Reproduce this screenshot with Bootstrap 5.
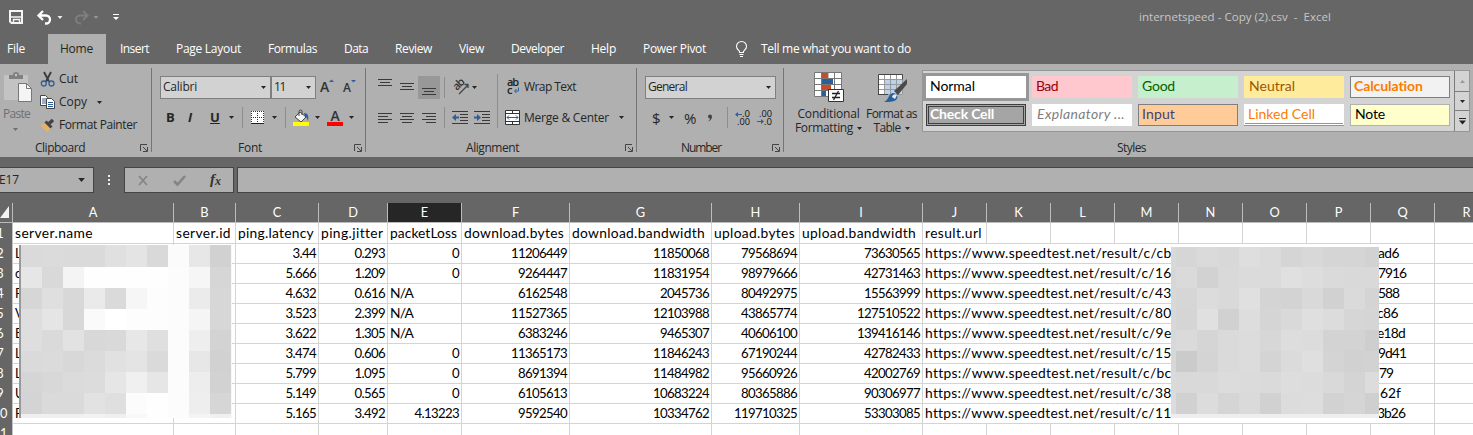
<!DOCTYPE html>
<html lang="en">
<head>
<meta charset="utf-8">
<title>internetspeed - Excel</title>
<link rel="stylesheet" href="https://cdn.jsdelivr.net/npm/bootstrap@5.3.0/dist/css/bootstrap.min.css">
<script src="https://cdn.jsdelivr.net/npm/bootstrap@5.3.0/dist/js/bootstrap.bundle.min.js"></script>
<style>
body{font:12px/16px "Open Sans","Noto Sans",sans-serif;background:#666;color:#262626;width:1473px;height:435px;overflow:hidden}
svg{display:block;overflow:visible}
[data-w]{white-space:pre;display:inline-block}
.qat{height:34px;padding-left:9px;display:grid;grid-template-columns:28px 20px 17px 19px 20px 1026px 1fr;align-items:center}
.doc-title{color:#c6c6c6;font-size:11.5px;margin-top:-1px}
.tabs{height:30px;display:grid;grid-template-columns:48px 58px 14px 56px 92px 76px 51px 64px 52px 80px 52px 93px 25px 1fr;color:#fff;line-height:30px}
.tabs .tab-file{padding-left:7px}
.tabs .tab-home{background:#b0b0b0;color:#262626;padding-left:12px}
.ribbon{height:93px;background:#b0b0b0}
.grp{position:relative;height:93px;padding-top:4px;flex:none}
.grp:not(:last-child)::after{content:"";position:absolute;right:0;top:4px;height:84px;width:1px;background:#757575}
.r1,.r2{display:grid;align-items:center}
.r1{height:36px;grid-template-rows:36px;padding-top:1px}.r2{height:27px;grid-template-rows:27px}
.cap{margin-top:9px;height:16px;display:grid;align-items:center}
.combo{height:23px;border:1px solid #7f7f7f;background:#d2d2d2;display:flex;align-items:center;justify-content:space-between;padding:0 4px 0 2px}
.vsep{width:1px;height:21px;background:#8e8e8e}
.g-clip{width:152px}.g-clip .cap{grid-template-columns:105px 1fr;padding-left:35px}
.clip-body{height:63px;display:grid;grid-template-columns:40px 1fr}
.clip-rows{display:grid;grid-template-rows:22px 24px 22px}
.clip-rows>div{display:grid;grid-template-columns:19px 38px 1fr;align-items:center}
.clip-rows>div:last-child{grid-template-columns:19px 1fr}
.paste{color:#6f6f6f;padding:4px 0 0 3px}
.paste-caret{margin:6px 0 0 10px}
.g-font{width:214px}.g-font .cap{grid-template-columns:116px 1fr;padding-left:86px}
.g-font .r1{padding-left:8px;grid-template-columns:111px 49px 22px 20px}
.g-font .r2{padding-left:14px;grid-template-columns:22px 22px 19px 13px 9px 21px 13px 8px 22px 12px 22px 10px}
.g-font .r2 b{font-size:13px;line-height:18px;margin-top:-2px}
.g-align{width:271px}.g-align .cap{grid-template-columns:159px 1fr;padding-left:100px}
.g-align .r1{padding-left:12px;grid-template-columns:22px 18px 26px 8px 20px 25px 10px 17px 1fr}
.g-align .r2{padding-left:12px;grid-template-columns:22px 22px 22px 8px 22px 23px 8px 19px 95px 1fr}
.tall{height:54px;align-self:start;margin-top:5px}
.pressed{width:22px;height:23px;background:#989898;padding:12px 4px 0}
.g-num{width:147px}.g-num .cap{grid-template-columns:91px 1fr;padding-left:44px}
.g-num .r1{padding-left:8px;grid-template-columns:131px}
.g-num .r2{padding-left:15px;grid-template-columns:17px 15px 23px 20px 8px 22px 1fr;font-size:15px}
.g-sty{width:689px}
.sty-body{height:63px;display:grid;grid-template-columns:12px 65px 61px 548px}
.big{display:flex;flex-direction:column;align-items:center;padding-top:3px}
.big svg.pic{height:33px;width:31px}
.gallery{margin-top:2px;height:62px;border:1px solid #969696;background:#d3d3d3;display:grid;grid-template-columns:531px 15px}
.cells{display:grid;grid-template-columns:repeat(5,100px);grid-template-rows:22px 22px;gap:6px;padding:5px 3px;font:14px/20px Lato,sans-serif}
.cells>div{padding:0 4px;height:22px;border:1px solid transparent;overflow:hidden}
.cells [data-w]{line-height:18px;vertical-align:top}
.cells .c-normal{background:#fff;color:#000;outline:3px solid #979797;padding-left:3px}
.cells .c-bad{background:#ffc7ce;color:#9c0006;padding-left:3px}.cells .c-good{background:#c6efce;color:#006100;padding-left:3px}.c-neutral{background:#ffeb9c;color:#9c5700}
.cells .c-calc{background:#f2f2f2;color:#fa7d00;border-color:#7f7f7f;font-weight:700;padding-left:3px}
.cells .c-check{background:#a5a5a5;color:#fff;border:3px double #3f3f3f;font-weight:700;padding:0 1px}
.cells .c-check [data-w]{line-height:14px}
.c-exp{background:#fff;color:#7f7f7f;font-style:italic}
.cells .c-input{background:#ffcc99;color:#3f3f76;border-color:#7f7f7f;padding-left:3px}
.cells .c-link{background:#fff;color:#fa7d00;border-bottom:3px double #fa7d00;padding-left:3px}
.cells .c-note{background:#ffffcc;color:#000;border-color:#b2b2b2}
.scrollers{display:grid;grid-template-rows:21px 19px 20px}
.scrollers>div{border-left:1px solid #7c7c7c;border-bottom:1px solid #7c7c7c;display:flex;align-items:center;justify-content:center}
.scrollers>div:last-child{border-bottom:0}
.g-sty .cap{padding-left:333px}
.fbar{height:46px;padding-top:10px;display:grid;grid-template-columns:94px 30px 110px 3px 1fr}
.fbox{height:26px;border:1px solid #444;background:#b0b0b0;display:flex;align-items:center}
.name-box [data-w]{margin-left:-1px}
.sheet{position:relative;height:232px;background:#fff;overflow:hidden;font:12.8px/20px Lato,sans-serif;color:#000}
.sheet [data-w]{font-size:13.8px;line-height:20px;vertical-align:top}
.srow{display:grid;height:20px;margin-left:-12px;grid-template-columns:25px 161px 62px 83px 69px 74px 108px 142px 88px 123px repeat(9,64px)}
.srow>div{border-right:1px solid #d4d4d4;border-bottom:1px solid #d4d4d4;padding:0 2px;white-space:nowrap;line-height:20px}
.srow>div.rh{background:#666;color:#fff;text-align:center;border-color:#c4c4c4;padding:0}
.srow>div.num{text-align:right;font-size:13.2px;letter-spacing:-.66px;padding-right:2px}
.srow.heads>div{background:#666;color:#fff;text-align:center;border-color:#bcbcbc;line-height:19px}
.srow.heads>div.sel{background:#262626}
.srow.heads>div.corner{padding:3px 3px 0 12px}
.srow>div.open{border-right-color:transparent}
.mosaic{position:absolute;display:grid}
.mosaic.m1{left:19px;top:42px;width:213px;height:173px;border-left:2px solid #999;grid-template-columns:repeat(10,21px);grid-template-rows:22px repeat(7,21px) 4px;background:#f8f8f8}
.mosaic.m2{left:1171px;top:44px;grid-template-columns:5px repeat(9,21px) 14px;grid-template-rows:20px repeat(7,21px) 4px}
</style>
</head>
<body>
<svg width="0" height="0" class="position-absolute">
  <symbol id="caret" viewBox="0 0 5 3"><path d="M0 0h5L2.500 3z" fill="currentColor"/></symbol>
  <symbol id="launch" viewBox="0 0 8 8"><path d="M.5 7V.5H7M3 3l4 4M7.500 3v4.500H3" fill="none" stroke="#444"/></symbol>
</svg>

<header class="qat">
  <svg width="14" height="14" viewBox="0 0 14 14"><path d="M1 1h12v12H2.500L1 11.500z" fill="none" stroke="#f4f4f4" stroke-width="2"/><path d="M1 7h12M4.500 13V9.500h6V13" stroke="#f4f4f4" stroke-width="1.500" fill="none"/></svg>
  <svg width="15" height="13" viewBox="0 0 15 13"><path d="M6 0L1.500 4.500 6 9M2 4.500h7a4 4 0 0 1 0 8H8" fill="none" stroke="#fff" stroke-width="2.300"/></svg>
  <svg width="6" height="3" color="#eee"><use href="#caret"/></svg>
  <svg width="15" height="13" viewBox="0 0 15 13"><path d="M9 0l4.500 4.500L9 9M13 4.500H6a4 4 0 0 0 0 8h1" fill="none" stroke="#7e7e7e" stroke-width="2"/></svg>
  <svg width="6" height="3" color="#929292"><use href="#caret"/></svg>
  <svg width="6" height="6" viewBox="0 0 6 6"><path d="M0 0h6v1H0zM0 3h6L3 6z" fill="#fff"/></svg>
  <span class="doc-title"><span data-w="192">internetspeed - Copy (2).csv  -  Excel</span></span>
</header>

<nav class="tabs">
  <div class="tab-file"><span data-w="18">File</span></div>
  <div class="tab-home"><span data-w="33">Home</span></div><i></i>
  <span><span data-w="29">Insert</span></span><span><span data-w="65">Page Layout</span></span><span><span data-w="49">Formulas</span></span><span><span data-w="24">Data</span></span><span><span data-w="37">Review</span></span><span><span data-w="25">View</span></span><span><span data-w="53">Developer</span></span><span><span data-w="25">Help</span></span><span><span data-w="63">Power Pivot</span></span>
  <svg width="11" height="16" viewBox="0 0 11 16" class="mt-2"><path d="M3.500 10.500V9.500C2.500 8 .5 7 .5 4.500a5 5 0 0 1 10 0c0 2.500-2 3.500-3 5v1zM3.500 12.500h4M4 14.500h3" fill="none" stroke="#fff" stroke-width="1.100"/></svg>
  <span><span data-w="150">Tell me what you want to do</span></span>
</nav>

<section class="ribbon d-flex">
  <div class="grp g-clip">
    <div class="clip-body">
      <div class="paste">
        <svg width="30" height="30" viewBox="0 0 30 30"><rect x="1" y="3" width="24" height="25" rx="1" fill="#c3c3c3"/><path d="M6 3h4a3 3 0 0 1 6 0h4v4H6z" fill="#808080"/><circle cx="13" cy="3" r="1.200" fill="#c3c3c3"/><path d="M15.500 11.500h8l5 5v13h-13z" fill="#f4f4f4" stroke="#777"/><path d="M23.500 11.500v5h5" fill="none" stroke="#777"/></svg>
        <div class="pt-1"><span data-w="27">Paste</span></div>
        <svg width="5" height="3" class="paste-caret"><use href="#caret"/></svg>
      </div>
      <div class="clip-rows">
        <div><svg width="15" height="15" viewBox="0 0 15 15"><path d="M4 0l5 9.500M11 0L6 9.500" stroke="#3c3c3c" stroke-width="1.900"/><circle cx="3.800" cy="11.500" r="2.500" fill="none" stroke="#2f5f9a" stroke-width="1.300"/><circle cx="11.500" cy="11.500" r="2.500" fill="none" stroke="#2f5f9a" stroke-width="1.300"/></svg><span><span data-w="19">Cut</span></span></div>
        <div><svg width="15" height="14" viewBox="0 0 15 14"><path d="M.5.500h5l2 2v8h-7z" fill="#fff" stroke="#444"/><path d="M2 4h4M2 6h4M2 8h4" stroke="#2f5f9a"/><path d="M6.500 3.500h5l3 3v7h-8z" fill="#fff" stroke="#444"/><path d="M8 7.500h5M8 9.500h5M8 11.500h5" stroke="#2f5f9a"/></svg><span><span data-w="28">Copy</span></span><svg width="5" height="3"><use href="#caret"/></svg></div>
        <div><svg width="16" height="14" viewBox="0 0 16 14"><path d="M0 7l6-2 5 5-4 4z" fill="#e5b367"/><path d="M5.500 3.500l6 6" stroke="#444" stroke-width="3"/><path d="M9 5.500L13 2" stroke="#444" stroke-width="3.600"/></svg><span><span data-w="78">Format Painter</span></span></div>
      </div>
    </div>
    <div class="cap"><span><span data-w="50">Clipboard</span></span><svg width="8" height="8"><use href="#launch"/></svg></div>
  </div>

  <div class="grp g-font">
    <div class="r1">
      <div class="combo"><span data-w="34">Calibri</span><svg width="5" height="3"><use href="#caret"/></svg></div>
      <div class="combo me-1"><span data-w="11">11</span><svg width="5" height="3"><use href="#caret"/></svg></div>
      <svg width="14" height="16" viewBox="0 0 14 16"><text x="0" y="13" font-size="14" font-weight="600" fill="#333">A</text><path d="M9 3l2.500-2.500L14 3z" fill="#2f5f9a"/></svg>
      <svg width="14" height="16" viewBox="0 0 14 16"><text x="1" y="13" font-size="12" font-weight="600" fill="#333">A</text><path d="M9 1h5l-2.500 2.500z" fill="#2f5f9a"/></svg>
    </div>
    <div class="r2">
      <b>B</b><b class="fst-italic">I</b><b class="text-decoration-underline">U</b><svg width="5" height="3"><use href="#caret"/></svg><i class="vsep"></i>
      <svg width="13" height="13" viewBox="0 0 13 13"><rect width="13" height="12" fill="#fff"/><path d="M.5 0v12M6.500 0v12M12.500 0v12M0 .5h13M0 6.500h13" stroke="#333" stroke-dasharray="1 1"/><path d="M0 12.500h13" stroke="#222"/></svg>
      <svg width="5" height="3"><use href="#caret"/></svg><i class="vsep"></i>
      <svg width="17" height="16" viewBox="0 0 17 16"><path d="M2 7l5-5 6 5-5 5z" fill="#f5f5f5" stroke="#444"/><path d="M6 6V1.500a1.500 1.500 0 0 1 3 0V5" fill="none" stroke="#444"/><path d="M11 3c4 0 5 3 4 8-1-2-1-4-3-4z" fill="#2f5f9a"/><path d="M0 12h16v4H0z" fill="#ff0"/></svg>
      <svg width="5" height="3"><use href="#caret"/></svg>
      <svg width="16" height="16" viewBox="0 0 16 16"><text x="3.500" y="11" font-size="14" font-weight="600" fill="#333">A</text><path d="M0 12h16v4H0z" fill="red"/></svg>
      <svg width="5" height="3"><use href="#caret"/></svg>
    </div>
    <div class="cap"><span><span data-w="24">Font</span></span><svg width="8" height="8"><use href="#launch"/></svg></div>
  </div>

  <div class="grp g-align">
    <div class="r1">
      <svg width="14" height="16" viewBox="0 0 14 16"><path d="M0 .5h14M2 3.500h10M0 6.500h14" stroke="#3a3a3a"/></svg>
      <svg width="14" height="16" viewBox="0 0 14 16"><path d="M0 4.500h14M2 7.500h10M0 10.500h14" stroke="#3a3a3a"/></svg>
      <div class="pressed"><svg width="14" height="8" viewBox="0 0 14 8"><path d="M0 .5h14M2 3.500h10M0 6.500h14" stroke="#3a3a3a"/></svg></div>
      <i class="vsep"></i>
      <svg width="17" height="16" viewBox="0 0 17 16"><text transform="translate(5 12) rotate(-45)" font-size="11" font-weight="600" textLength="12" fill="#333">ab</text><path d="M7 15l9-9M12.500 5.500H16V9" fill="none" stroke="#444" stroke-width="1.300"/></svg>
      <svg width="5" height="3"><use href="#caret"/></svg>
      <i class="vsep tall"></i>
      <svg width="13" height="16" viewBox="0 0 13 16"><text x="0" y="7" font-size="11" font-weight="600" textLength="12" fill="#222">ab</text><text x="0" y="14.500" font-size="11" font-weight="600" fill="#222">c</text><path d="M11.500 8.500V12H8M9.500 10l-2 2 2 2" fill="none" stroke="#2f5f9a"/></svg>
      <span><span data-w="52">Wrap Text</span></span>
    </div>
    <div class="r2">
      <svg width="14" height="12" viewBox="0 0 14 12"><path d="M0 1.500h14M0 4.500h10M0 7.500h14M0 10.500h10" stroke="#3a3a3a"/></svg>
      <svg width="14" height="12" viewBox="0 0 14 12"><path d="M0 1.500h14M2 4.500h10M0 7.500h14M2 10.500h10" stroke="#3a3a3a"/></svg>
      <svg width="14" height="12" viewBox="0 0 14 12"><path d="M0 1.500h14M4 4.500h10M0 7.500h14M4 10.500h10" stroke="#3a3a3a"/></svg>
      <i class="vsep"></i>
      <svg width="16" height="14" viewBox="0 0 16 14"><path d="M0 .5h16M8 3.500h8M8 6.500h8M8 9.500h8M0 12.500h16" stroke="#3a3a3a"/><path d="M0 6.500L4 3v2.500h3v2H4V10z" fill="#2f5f9a"/></svg>
      <svg width="16" height="14" viewBox="0 0 16 14"><path d="M0 .5h16M8 3.500h8M8 6.500h8M8 9.500h8M0 12.500h16" stroke="#3a3a3a"/><path d="M7 6.500L3 3v2.500H0v2h3V10z" fill="#2f5f9a"/></svg>
      <i></i>
      <svg width="15" height="15" viewBox="0 0 15 15"><path d="M.5.500h14v14H.5z" fill="#fff" stroke="#333"/><path d="M.5 3.500h14M.5 11.500h14M7.500 0v3M7.500 12v3" stroke="#333"/><path d="M2 7.500h11M4 5.500l-2 2 2 2M11 5.500l2 2-2 2" fill="none" stroke="#2f5f9a"/></svg>
      <span><span data-w="85">Merge &amp; Center</span></span><svg width="5" height="3"><use href="#caret"/></svg>
    </div>
    <div class="cap"><span><span data-w="53">Alignment</span></span><svg width="8" height="8"><use href="#launch"/></svg></div>
  </div>

  <div class="grp g-num">
    <div class="r1"><div class="combo"><span data-w="39">General</span><svg width="5" height="3"><use href="#caret"/></svg></div></div>
    <div class="r2">
      <span>$</span><svg width="5" height="3"><use href="#caret"/></svg><span><span data-w="13">%</span></span><svg width="6" height="8" viewBox="0 0 6 8"><path d="M1 2.500a2 2 0 1 1 4 0C5 5 3.500 6.500 1 7.500 2.500 6 3 5.500 3 4.500a2 2 0 0 1-2-2z" fill="#444"/></svg><i class="vsep"></i>
      <svg width="15" height="14" viewBox="0 0 15 14"><path d="M0 3.500L3 1v2h4v1H3v2z" fill="#2f5f9a"/><text x="7" y="6" font-size="9" textLength="8" lengthAdjust="spacingAndGlyphs" fill="#111">.0</text><text x="2" y="13.500" font-size="9" textLength="13" lengthAdjust="spacingAndGlyphs" fill="#111">.00</text></svg>
      <svg width="15" height="14" viewBox="0 0 15 14"><path d="M7 10.500L4 8v2H0v1h4v2z" fill="#2f5f9a"/><text x="2" y="6" font-size="9" textLength="13" lengthAdjust="spacingAndGlyphs" fill="#111">.00</text><text x="7" y="13.500" font-size="9" textLength="8" lengthAdjust="spacingAndGlyphs" fill="#111">.0</text></svg>
    </div>
    <div class="cap"><span><span data-w="40">Number</span></span><svg width="8" height="8"><use href="#launch"/></svg></div>
  </div>

  <div class="grp g-sty">
    <div class="sty-body"><i></i>
      <div class="big">
        <svg class="pic" viewBox="0 0 31 33"><path d="M1.500 1.500h27v24h-27z" fill="#fff"/><path d="M9 1h6v6H9zM9 13h9v6H9z" fill="#c84b28"/><path d="M9 7h11v6H9zM9 19h4v6H9z" fill="#2a6099"/><path d="M1.500 1.500h27v24h-27zM1.500 7.500h27M1.500 13.500h27M1.500 19.500h27M8.500 1.500v24M21.500 1.500v24M15 1v6" fill="none" stroke="#777"/><path d="M15.500 18.500h15v12h-15z" fill="#fff" stroke="#333"/><path d="M19 22.500h8M19 26.500h8M25.500 20l-5 9" stroke="#222" stroke-width="1.300"/></svg>
        <div class="lh-1 pt-1"><span data-w="62">Conditional</span></div>
        <div class="d-flex align-items-center"><span data-w="58">Formatting</span><svg width="5" height="3" class="ms-1"><use href="#caret"/></svg></div>
      </div>
      <div class="big">
        <svg class="pic" viewBox="0 0 31 33"><path d="M2.500 3.500h24v20h-24z" fill="#fff"/><path d="M9 9h17v15H9z" fill="#bcd2ea"/><path d="M2.500 3.500h24v20h-24zM2.500 8.500h24M2.500 13.500h24M2.500 18.500h24M8.500 3.500v20M14.500 3.500v20M20.500 3.500v20" fill="none" stroke="#999"/><path d="M2.500 23.500V3.500h24v5M2 23.500h10" fill="none" stroke="#444"/><path d="M31 8v5l-9 11-4-4z" fill="#4a4a4a"/><path d="M8 31c5-2 4-8 9-9 4 0 6 4 3 7-3 2-7 2-12 2z" fill="#2a6099"/><path d="M16 26c0-2 3-4 5-2l-2 4z" fill="#dcecf8"/></svg>
        <div class="lh-1 pt-1"><span data-w="51">Format as</span></div>
        <div class="d-flex align-items-center"><span data-w="27">Table</span><svg width="5" height="3" class="ms-1"><use href="#caret"/></svg></div>
      </div>
      <div class="gallery">
        <div class="cells">
          <div class="c-normal"><span data-w="45">Normal</span></div><div class="c-bad"><span data-w="22">Bad</span></div><div class="c-good"><span data-w="33">Good</span></div><div class="c-neutral"><span data-w="46">Neutral</span></div><div class="c-calc"><span data-w="69">Calculation</span></div>
          <div class="c-check"><span data-w="64">Check Cell</span></div><div class="c-exp"><span data-w="88">Explanatory ...</span></div><div class="c-input"><span data-w="33">Input</span></div><div class="c-link"><span data-w="67">Linked Cell</span></div><div class="c-note"><span data-w="30">Note</span></div>
        </div>
        <div class="scrollers">
          <div><svg width="5" height="3" viewBox="0 0 5 3"><path d="M0 3h5L2.500 0z" fill="#999"/></svg></div>
          <div><svg width="5" height="3"><use href="#caret"/></svg></div>
          <div><svg width="7" height="7" viewBox="0 0 7 7"><path d="M0 0h7v1H0zM0 2.500h7L3.500 6.500z" fill="#222"/></svg></div>
        </div>
      </div>
    </div>
    <div class="cap"><span><span data-w="29">Styles</span></span></div>
  </div>
</section>

<section class="fbar">
  <div class="fbox name-box border-start-0 justify-content-between pe-1"><span data-w="20">E17</span><svg width="7" height="4" class="me-1"><use href="#caret"/></svg></div>
  <svg width="30" height="26"><path d="M14 8h2v2h-2zM14 12h2v2h-2zM14 16h2v2h-2z" fill="#eee"/></svg>
  <div class="fbox">
    <svg width="108" height="24" viewBox="0 0 108 24"><path d="M14 8l8 9M22 8l-8 9" stroke="#858585" stroke-width="1.800"/><path d="M49 13l3.500 3.500L60 8" fill="none" stroke="#858585" stroke-width="2.600"/><text x="85" y="16" font-family="Liberation Serif" font-style="italic" font-weight="bold" font-size="15" fill="#333">f</text><text x="90" y="17" font-family="Liberation Serif" font-style="italic" font-weight="bold" font-size="12" fill="#333">x</text></svg>
  </div><i></i>
  <div class="fbox border-end-0"></div>
</section>

<main class="sheet" id="sheet"></main>

<script>
const names = ['server.name','server.id','ping.latency','ping.jitter','packetLoss','download.bytes','download.bandwidth','upload.bytes','upload.bandwidth','result.url'];
const nameWidths = [78,55,76,62,67,100,133,81,114,57];
const rows = [
 ['L','3.44','0.293','0','11206449','11850068','79568694','73630565','cb','ad6'],
 ['c','5.666','1.209','0','9264447','11831954','98979666','42731463','16','7916'],
 ['P','4.632','0.616','N/A','6162548','2045736','80492975','15563999','43','588'],
 ['V','3.523','2.399','N/A','11527365','12103988','43865774','127510522','80','c86'],
 ['E','3.622','1.305','N/A','6383246','9465307','40606100','139416146','9e','e18d'],
 ['L','3.474','0.606','0','11365173','11846243','67190244','42782433','15','9d41'],
 ['L','5.799','1.095','0','8691394','11484982','95660926','42002769','bc','79'],
 ['U','5.149','0.565','0','6105613','10683224','80365886','90306977','38','62f'],
 ['P','5.165','3.492','4.13223','9592540','10334762','119710325','53303085','11','3b26']
];
// Left padding of each result id's tail
const tail = [7,7,7,6,6,7,8,9,6];
const fit = (t, w) => `<span data-w="${w}">${t}</span>`;
let h = '<div class="srow heads"><div class="corner"><svg width="9" height="12" viewBox="0 0 9 12"><path d="M9 0v12H0z" fill="#f2f2f2"/></svg></div>';
for (const c of 'ABCDEFGHIJKLMNOPQR') h += `<div class="${c === 'E' ? 'sel' : ''}">${c}</div>`;
h += '</div><div class="srow"><div class="rh">1</div>';
names.forEach((n, i) => h += `<div>${fit(n, nameWidths[i])}</div>`);
h += '<div></div>'.repeat(8) + '</div>';
rows.forEach((r, i) => {
  h += `<div class="srow"><div class="rh">${i + 2}</div><div>${r[0]}</div><div></div>`;
  for (let k = 1; k < 8; k++) h += r[k] === 'N/A' ? `<div>${fit('N/A', 23)}</div>` : `<div class="num">${r[k]}</div>`;
  h += `<div class="open">${fit('https://www.speedtest.net/result/c/' + r[8], 246)}</div>` + '<div class="open"></div>'.repeat(6);
  h += `<div style="padding-left:${tail[i]}px">${fit(r[9], r[9].length * 7)}</div><div></div></div>`;
});
h += '<div class="srow"><div class="rh">11</div>' + '<div></div>'.repeat(18) + '</div>';

// Redacted areas: grey level of each tile, two hex digits per tile
const m1 = ['dadbdadae0e4d9fbe7d1','e6d9f4fefefefefcf6d6','d6dfd8eadaf6fdfcebd7','dee5d8fafffdfdfcf5d7','dedae2d8d9e7dffceed3','dadbd8dbe1e4dafce7d1','d5d8dbdce6f0e6fcedd2','d4dadae2dffcfefceed6','eff0f0f2eff8fefcf4f0'];
const m2 = ['d9d6dad8dedbd5d8d5d5d2','d7dad2d9dbdbe0dddad9d9','d8d6dcd9e0d4d3d9d1dad4','d8d5e0d1ddd5d9dfdcd6d5','d8dad5dadcd7dddcd3d3ce','d7cbd4dadcd4dbdfd4d1d2','dad9d9dcdbdadddcd9d4dc','dcd1dcd5dad1dcddd2d5cf','eeeeeeeeeeeeeeeeeeeeee'];
const tiles = m => m.map(r => r.match(/../g).map(c => `<i style="background:#${c + c + c}"></i>`).join('')).join('');
h += `<div class="mosaic m1">${tiles(m1)}</div><div class="mosaic m2">${tiles(m2)}</div>`;
document.getElementById('sheet').innerHTML = h;

// Spread the letters of each label over its design width
document.querySelectorAll('[data-w]').forEach(e => {
  const w = e.getBoundingClientRect().width;
  e.style.letterSpacing = ((+e.dataset.w - w) / e.textContent.length).toFixed(3) + 'px';
});
</script>
</body>
</html>
